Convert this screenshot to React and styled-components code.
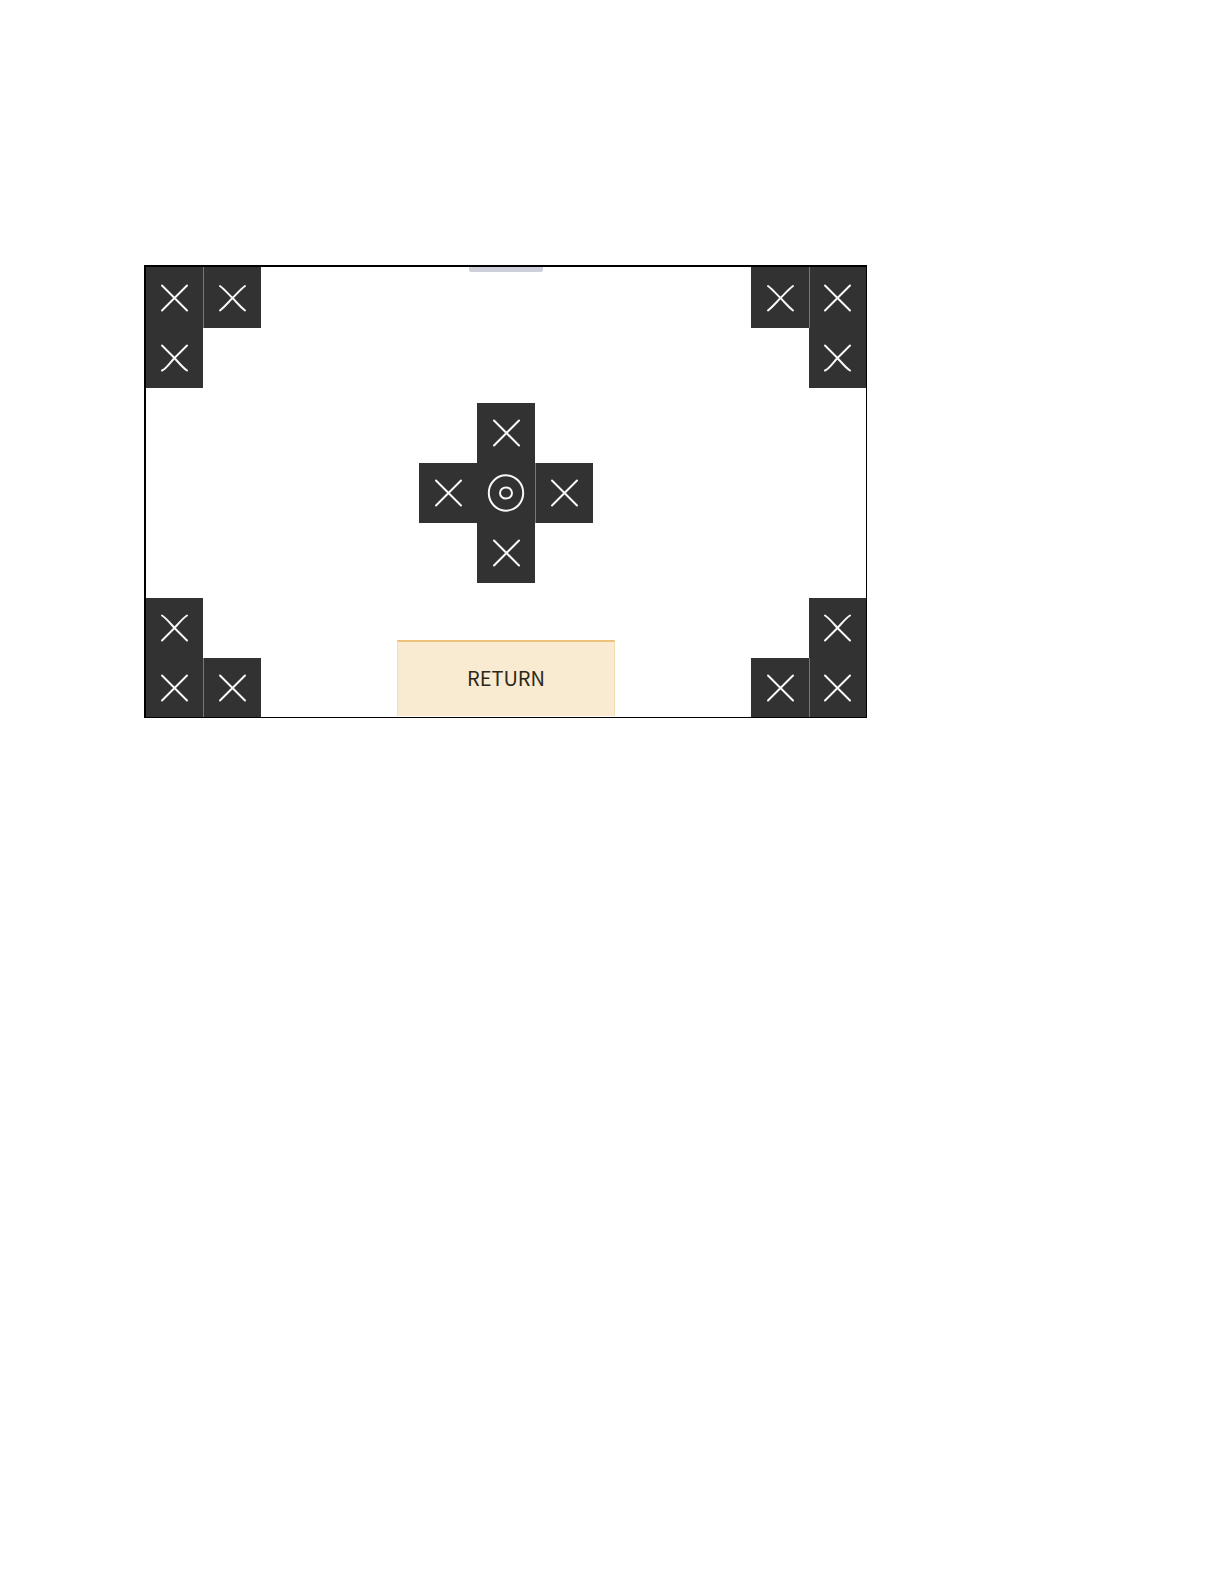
import React from "react";
import styled, { createGlobalStyle } from "styled-components";

const GlobalStyle = createGlobalStyle`
  body {
    margin: 0;
    background: #fff;
  }
`;

const Page = styled.main`
  box-sizing: border-box;
  min-height: 100vh;
  padding: 265px 16px 16px 144px;
`;

const Panel = styled.section`
  box-sizing: border-box;
  display: flex;
  flex-direction: column;
  gap: 15px;
  width: 100%;
  max-width: 723px;
  border: solid #000;
  border-width: 2px 1px 1px 2px;
`;

const Row = styled.div`
  display: flex;
  justify-content: ${({ $center }) => ($center ? "center" : "space-between")};
  align-items: ${({ $align }) => $align || "stretch"};
`;

const Corner = styled.div`
  display: grid;
  grid-template-columns: ${({ $right }) => ($right ? "58px 57px" : "57px 58px")};
  grid-template-rows: ${({ $bottom }) => ($bottom ? "60px 59px" : "61px 60px")};
`;

const Cross = styled.div`
  display: grid;
  grid-template-columns: repeat(3, 58px);
  grid-template-rows: repeat(3, 60px);
`;

const Tile = styled.button`
  display: flex;
  align-items: center;
  justify-content: center;
  grid-column: ${({ $col }) => $col};
  grid-row: ${({ $row }) => $row};
  padding: 0;
  border: 0;
  background: #323232;
  box-shadow: ${({ $divided }) => ($divided ? "inset 1px 0 #777" : "none")};
  cursor: pointer;
`;

const Icon = styled.svg`
  display: block;
  fill: none;
  stroke: #f8f8f8;
  stroke-width: 2;
  stroke-linecap: round;
  stroke-linejoin: round;
`;

const Handle = styled.div`
  width: 74px;
  height: 5px;
  border-radius: 0 0 2px 2px;
  background: #cdcfdb;
`;

const ReturnButton = styled.button`
  box-sizing: border-box;
  width: 218px;
  height: 76px;
  margin-bottom: 1px;
  padding: 0 0 2px;
  border: solid #f3dfb4;
  border-width: 2px 1px 0;
  border-top-color: #eec27a;
  background: #f9ead2;
  color: #2e2818;
  font: 20px/24px "Noto Sans CJK SC", "Noto Sans", sans-serif;
  cursor: pointer;
`;

// hand-drawn strokes, one variant per bend
const crosses = {
  straight: "M2 2.5 27 27.5M27 2.5 2 27.5",
  outer: "M2 3C6 6 10 10.5 14.5 15S22 23.5 27 27.5M27 3C23 6 19 10.5 14.5 15S7 23.5 2 27.5",
  upper: "M2 2.5C6 5 10 10 14.5 15L27 27.5M27 2.5C23 5 19 10 14.5 15L2 27.5",
  lower: "M2 2.5 14.5 15C19 20 23 25 27 27.5M27 2.5 14.5 15C10 19.5 7 25 2 27.5",
};

const CrossTile = ({ shape = "straight", label, ...rest }) => (
  <Tile type="button" aria-label={label} {...rest}>
    <Icon width="29" height="30" viewBox="0 0 29 30" aria-hidden="true">
      <path d={crosses[shape]} />
    </Icon>
  </Tile>
);

const TargetTile = (props) => (
  <Tile type="button" aria-label="Center" {...props}>
    <Icon width="38" height="38" viewBox="0 0 38 38" aria-hidden="true">
      <ellipse cx="19" cy="19" rx="17.2" ry="17.7" />
      <ellipse cx="19" cy="19" rx="6" ry="5.5" />
    </Icon>
  </Tile>
);

export default function App() {
  return (
    <>
      <GlobalStyle />
      <Page>
        <Panel>
          <Row $align="flex-start">
            <Corner>
              <CrossTile label="Top left corner" $col={1} $row={1} />
              <CrossTile label="Top left, right" shape="outer" $col={2} $row={1} $divided />
              <CrossTile label="Top left, below" shape="lower" $col={1} $row={2} />
            </Corner>
            <Handle />
            <Corner $right>
              <CrossTile label="Top right, left" shape="outer" $col={1} $row={1} />
              <CrossTile label="Top right corner" $col={2} $row={1} $divided />
              <CrossTile label="Top right, below" shape="lower" $col={2} $row={2} />
            </Corner>
          </Row>
          <Row $center>
            <Cross>
              <CrossTile label="Up" $col={2} $row={1} />
              <CrossTile label="Left" $col={1} $row={2} />
              <TargetTile $col={2} $row={2} />
              <CrossTile label="Right" $col={3} $row={2} $divided />
              <CrossTile label="Down" $col={2} $row={3} />
            </Cross>
          </Row>
          <Row $align="flex-end">
            <Corner $bottom>
              <CrossTile label="Bottom left, above" shape="upper" $col={1} $row={1} />
              <CrossTile label="Bottom left corner" $col={1} $row={2} />
              <CrossTile label="Bottom left, right" $col={2} $row={2} $divided />
            </Corner>
            <ReturnButton type="button">RETURN</ReturnButton>
            <Corner $right $bottom>
              <CrossTile label="Bottom right, above" shape="upper" $col={2} $row={1} />
              <CrossTile label="Bottom right, left" $col={1} $row={2} />
              <CrossTile label="Bottom right corner" $col={2} $row={2} $divided />
            </Corner>
          </Row>
        </Panel>
      </Page>
    </>
  );
}
